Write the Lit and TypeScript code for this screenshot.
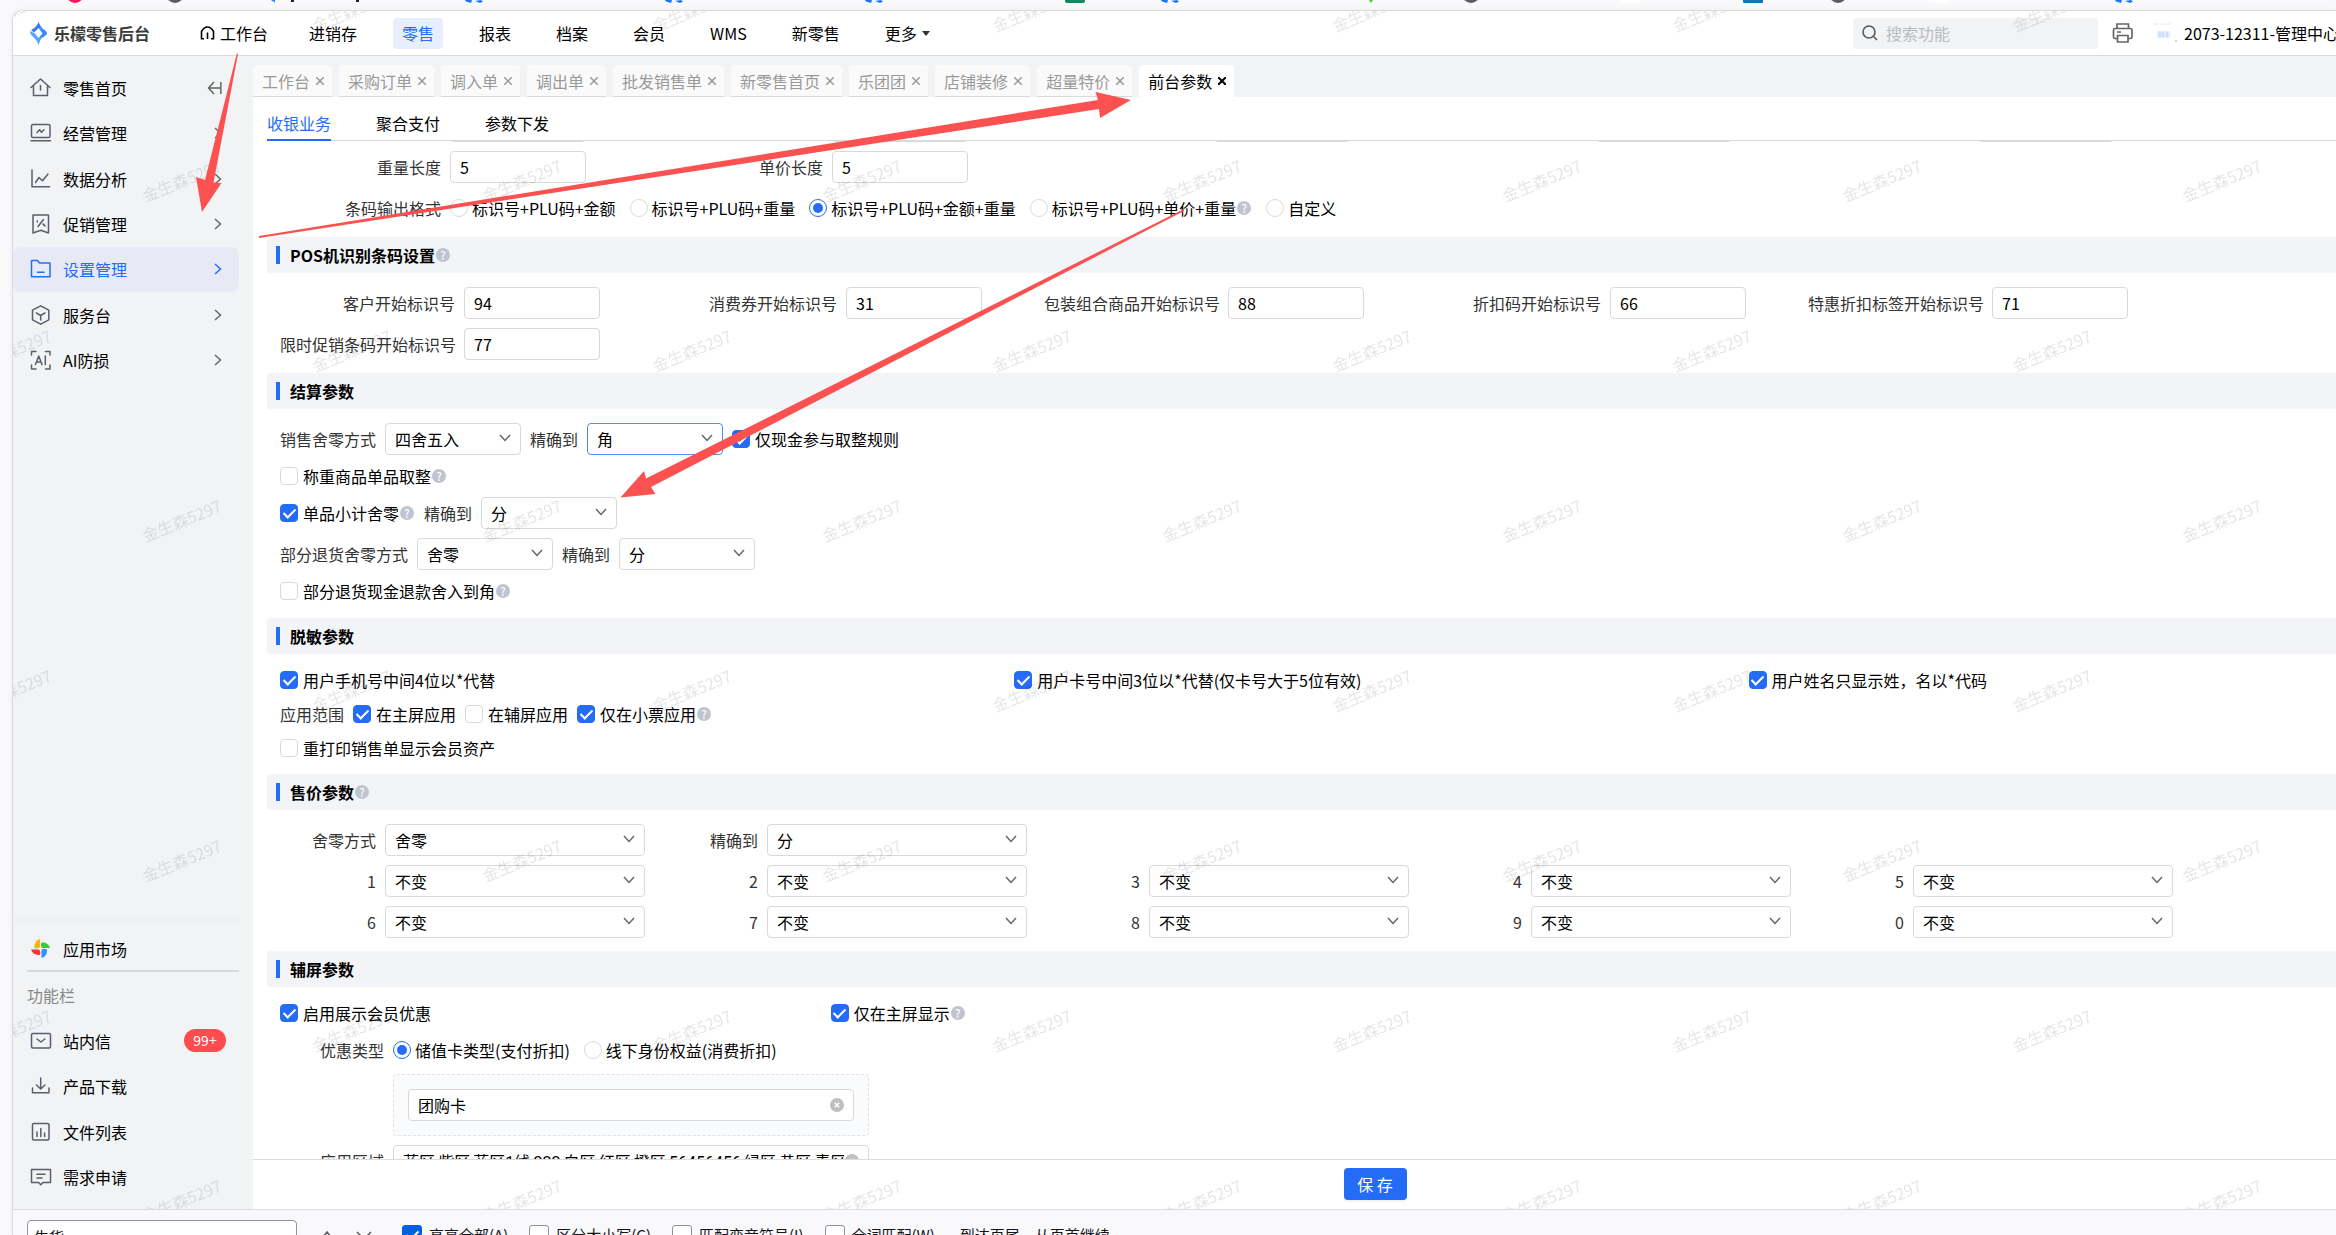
import { LitElement, html, css, svg, nothing, TemplateResult } from "lit";
import { customElement, state } from "lit/decorators.js";
import { classMap } from "lit/directives/class-map.js";

type Glyph = TemplateResult<2>;

const icons: Record<string, Glyph> = {
  home: svg`<path d="M1 10.500 10.500 2 20 10.500M3.500 8.500V18.500H17.500V8.500M10.500 8.500V13"/>`,
  monitor: svg`<rect x="1.500" y="2.500" width="18.500" height="13" rx="1.500"/><path d="M1 18.800H20.500M7 10.500 9.500 7.800 11.500 10.300 14 7.800"/>`,
  chart: svg`<path d="M2 2V18.800H19.500M5.500 14.500 9 9.500 12.500 12.800 18 6"/>`,
  promo: svg`<path d="M3 2H18.500V20L10.800 17.300 3 20ZM13.500 6.500 8 13.500"/><path d="M7.300 8V9M14 11.500V12.500M13 11 15 13"/>`,
  folder: svg`<path d="M1.500 18V2.500H7.500L9.500 5H20V18.800H1.500ZM7.500 14.200H14"/>`,
  box: svg`<path d="M10.700 1.800 18.800 6.200V15.800L10.700 20.200 2.500 15.800V6.200ZM10.700 16V11.500M10.700 11.500 6.300 8.800M10.700 11.500 15 8.800"/>`,
  ai: svg`<path d="M1.500 6V2.500H6M15.500 2.500H20V6M20 16V20H15.500M6 20H1.500V16"/><path d="M5.500 15.500 8.700 7 12 15.500M6.600 13H10.900M15.300 7V15.500"/>`,
  mail: svg`<rect x="1.500" y="3.500" width="19" height="14.500" rx="1.500"/><path d="M7 9 10.800 12 14.800 9"/>`,
  download: svg`<path d="M10.700 3V13.500M6.500 10 10.700 14 15 10M2.500 13V17.800H19V13"/>`,
  file: svg`<rect x="2.500" y="2.500" width="16.500" height="16.500" rx="1.500"/><path d="M7 11V15.500M10.800 7.500V15.500M14.600 12V15.500"/>`,
  speech: svg`<path d="M1.500 3.500H20.500V16.500H13L10.800 18.800 8.600 16.500H1.500ZM7 8.300H15M7 12H12"/>`,
};

const icon = (name: string) => html`<svg class="icon" viewBox="0 0 22 22" aria-hidden="true">${icons[name]}</svg>`;
const chevronRight = html`<svg class="chev" viewBox="0 0 8 14" aria-hidden="true"><path d="M1 2 6.500 7 1 12"/></svg>`;
const help = html`<span class="help">?</span>`;

const sideTop = [
  ["home", "零售首页"], ["monitor", "经营管理"], ["chart", "数据分析"], ["promo", "促销管理"],
  ["folder", "设置管理"], ["box", "服务台"], ["ai", "AI防损"],
];
const sideTools = [["mail", "站内信"], ["download", "产品下载"], ["file", "文件列表"], ["speech", "需求申请"]];
const navItems = ["进销存", "零售", "报表", "档案", "会员", "WMS", "新零售"];
const tabs = ["工作台", "采购订单", "调入单", "调出单", "批发销售单", "新零售首页", "乐团团", "店铺装修", "超量特价", "前台参数"];
const barcodeFormats = ["标识号+PLU码+金额", "标识号+PLU码+重量", "标识号+PLU码+金额+重量", "标识号+PLU码+单价+重量", "自定义"];
const posCodes = [
  ["客户开始标识号", "94"], ["消费券开始标识号", "31"], ["包装组合商品开始标识号", "88"],
  ["折扣码开始标识号", "66"], ["特惠折扣标签开始标识号", "71"], ["限时促销条码开始标识号", "77"],
];
const digits = ["1", "2", "3", "4", "5", "6", "7", "8", "9", "0"];

@customElement("app-root")
export class AppRoot extends LitElement {
  @state() private section = "设置管理";
  @state() private tab = "前台参数";
  private seq = 0;

  static styles = css`
    :host {
      display: block;
      font: 16px/24px "Noto Sans CJK SC", "Noto Sans", sans-serif;
      color: #000;
    }
    * { box-sizing: border-box; }
    button, input, select { font: inherit; color: inherit; margin: 0; }
    button { border: 0; background: none; padding: 0; cursor: pointer; }
    a { color: inherit; text-decoration: none; }
    svg { display: block; flex: none; }

    .screen {
      position: relative;
      height: 100vh;
      overflow: hidden;
      display: flex;
      flex-direction: column;
      background: #f9f9fb;
    }
    .strip { height: 10px; flex: none; overflow: hidden; }
    .frame {
      position: relative;
      flex: 1;
      min-height: 0;
      margin-left: 12px;
      border: solid #d9dadd;
      border-width: 1px 0 0 1px;
      border-top-left-radius: 10px;
      overflow: hidden;
      display: flex;
      flex-direction: column;
      background: #fff;
      box-shadow: 0 0 6px #0000000d;
    }

    .top {
      flex: none;
      height: 45px;
      display: flex;
      align-items: center;
      border-bottom: 1px solid #d8dadc;
      padding-left: 17px;
      white-space: nowrap;
    }
    .brand { flex: 0 0 161px; display: flex; align-items: center; gap: 7px; font-weight: 700; color: #3a3a3a; }
    .nav { display: flex; gap: 27px; }
    .nav-item { height: 31px; padding: 0 9px; border-radius: 4px; display: flex; align-items: center; gap: 5px; }
    .nav-item.first { padding-right: 5px; }
    .nav-item.on { background: #e7eefd; color: #246cf5; }
    .caret { border: 4px solid transparent; border-top: 5px solid #333; border-bottom: 0; }
    .tools { margin-left: auto; flex: 0 0 483px; display: flex; align-items: center; min-width: 0; }
    .search { flex: 0 0 245px; height: 31px; border-radius: 4px; background: #f1f3f5; display: flex; align-items: center; gap: 8px; padding-left: 9px; }
    .search input { flex: 1; min-width: 0; border: 0; background: none; outline: 0; padding: 0; }
    .search input::placeholder { color: #b9bcc0; opacity: 1; }
    .print { margin: 0 20px 0 14px; }
    .user { flex: 1; min-width: 0; overflow: hidden; display: flex; align-items: center; gap: 7px; }

    .mid { flex: 1; min-height: 0; display: flex; }
    .side {
      flex: 0 0 240px;
      background: #f1f3f5;
      display: flex;
      flex-direction: column;
      padding: 9px 14px 9px 0;
    }
    .menu { display: grid; grid-auto-rows: 1fr; height: 318px; }
    .menu.tools-menu { height: 182px; }
    .side-item {
      display: flex; align-items: center; gap: 11px; width: 100%; height: 100%;
      padding: 0 17px; border-radius: 8px; text-align: left;
    }
    .side-item.on { background: #e7eaf4; color: #246cf5; }
    .side-item .grow { flex: 1; }
    .icon { width: 22px; height: 22px; fill: none; stroke: #5d5d6d; stroke-width: 1.500; stroke-linejoin: round; stroke-linecap: round; }
    .chev { width: 8px; height: 14px; fill: none; stroke: #666; stroke-width: 1.500; }
    .on .icon, .on .chev { stroke: #246cf5; }
    .market { margin-top: auto; height: 52px; border-top: 6px solid #eff1f3; padding-top: 4px; }
    .rule { height: 2px; background: #d6d8da; margin-left: 14px; }
    .caption { padding: 11px 0 11px 14px; color: #888; }
    .badge { background: #ff4d4f; color: #fff; font-size: 14px; line-height: 23px; width: 42px; text-align: center; border-radius: 12px; margin-right: -4px; }

    .main { flex: 1; min-width: 0; display: flex; flex-direction: column; background: #fff; }
    .tabs { flex: none; display: flex; gap: 7px; height: 41px; padding-top: 9px; background: #f1f3f5; white-space: nowrap; }
    .tab { display: flex; align-items: center; gap: 6px; padding: 0 8px 0 9px; background: #fafafa; color: #999; border-bottom: 1px solid #d9d9d9; border-radius: 4px 4px 0 0; }
    .tab.on { background: #fff; color: #000; border-color: #fff; }
    .x { width: 8px; height: 8px; fill: none; stroke: currentColor; stroke-width: 1.500; }
    .tab.on .x { stroke-width: 2; }
    .subtabs { flex: none; display: flex; gap: 45px; height: 44px; margin-left: 14px; border-bottom: 1px solid #d9d9d9; }
    .subtab { height: 44px; padding-top: 9px; border-bottom: 2px solid transparent; }
    .subtab.on { color: #246cf5; border-color: #246cf5; }

    .scroll { flex: 1; min-height: 0; overflow: hidden; padding-left: 14px; }
    .scrolled { margin-top: -31px; }
    .body { padding: 14px 13px 13px; display: flex; flex-direction: column; gap: 9px; }
    .body.first { padding: 0 13px 13px; }
    .body.roomy { padding-bottom: 15px; }
    .body.loose { gap: 10px; padding-bottom: 14px; }
    .head { height: 36px; background: #f2f4f7; border-radius: 4px 0 0 4px; display: flex; align-items: center; padding-left: 9px; margin: 0; font-size: 16px; font-weight: 700; }
    .head::before { content: ""; width: 4px; height: 18px; background: #246cf5; margin-right: 10px; }
    .help {
      flex: none; width: 14px; height: 14px; border-radius: 7px; background: #bfc4d0; color: #fff;
      font-size: 11px; line-height: 14px; font-weight: 500; text-align: center; margin: 0 1px;
    }
    .fields { display: grid; grid-template-columns: repeat(5, 1fr); row-gap: 9px; padding-right: 133px; }
    .field { display: flex; align-items: center; gap: 9px; white-space: nowrap; }
    .lab { text-align: right; color: #333; flex: none; }
    .w161 .lab, .lab.w161 { width: 161px; }
    .w175 .lab { width: 175px; }
    .w96 .lab { width: 96px; }
    .lab.w104 { width: 104px; }
    .text {
      width: 136px; height: 32px; border: 1px solid #d9d9d9; border-radius: 4px; background: #fff;
      padding: 0 9px; outline: 0;
    }
    .pick { position: relative; width: 136px; display: block; }
    .w96 .pick { width: 260px; }
    .pick select { appearance: none; width: 100%; height: 32px; border: 1px solid #d9d9d9; border-radius: 4px; background: #fff; padding: 0 28px 0 9px; outline: 0; }
    .pick.focus select { border-color: #4a8bf8; }
    .pick svg { position: absolute; right: 10px; top: 11px; width: 12px; height: 8px; fill: none; stroke: #666; stroke-width: 1.500; pointer-events: none; }

    .row { display: flex; align-items: center; gap: 9px; min-height: 24px; white-space: nowrap; }
    .row.radios { gap: 14px; }
    .row.radios .lab { margin-right: -5px; }
    .row.format { min-height: 32px; }
    .thirds { display: grid; grid-template-columns: 5fr 5fr 4fr; margin-right: -13px; }
    .halves { display: grid; grid-template-columns: 15fr 41fr; margin: 0 -13px 4px 0; }
    .opt { display: inline-flex; align-items: center; gap: 5px; }
    .row.radios .opt { gap: 4px; }
    .opt-text { display: inline-flex; align-items: center; }
    .cb, .rd { appearance: none; flex: none; width: 18px; height: 18px; border: 1px solid #d9d9d9; background: #fff; border-radius: 4px; display: grid; place-items: center; }
    .cb:checked { background: #246cf5; border-color: #246cf5; }
    .cb:checked::after { content: ""; width: 5px; height: 10px; margin-top: -2px; border: solid #fff; border-width: 0 2px 2px 0; transform: rotate(45deg); }
    .rd { border-radius: 9px; }
    .rd:checked { border-color: #246cf5; }
    .rd:checked::after { content: ""; width: 10px; height: 10px; border-radius: 5px; background: #246cf5; }

    .cards { margin: 3px 0 0 113px; width: 476px; padding: 14px; border: 1px dashed #e0e2e6; border-radius: 4px; background: #fafbfd; }
    .clearable { position: relative; display: block; width: 476px; }
    .cards .clearable { width: auto; }
    .clearable .text { width: 100%; padding-right: 24px; }
    .area .text { font-family: Roboto, "Noto Sans CJK SC", sans-serif; }
    .clear { position: absolute; right: 10px; top: 9px; width: 14px; height: 14px; }

    .foot { flex: none; height: 50px; border-top: 1px solid #dcdcdc; display: flex; align-items: center; justify-content: center; padding-left: 161px; }
    .save { width: 63px; height: 32px; margin-bottom: 1px; border-radius: 4px; background: #246cf5; color: #fff; box-shadow: 0 2px 0 #0000000b; }

    .find {
      flex: none; height: 26px; display: flex; align-items: flex-start; border-top: 1px solid #dcdce0; background: #f9f9fb;
      padding: 10px 0 0 14px; font-size: 15px; line-height: 30px; color: #15141a; overflow: hidden; white-space: nowrap;
    }
    .find .query { width: 270px; height: 32px; border: 1px solid #8f8f9d; border-radius: 4px; background: #fff; padding: 0 6px; outline: 0; }
    .find .step { margin: 11px 0 0 24px; }
    .find .step + .step { margin: 11px 30px 0 23px; }
    .find .opt { gap: 7px; height: 30px; margin-right: 21px; }
    .find .status { margin-left: 4px; }
    .find .cb { width: 20px; height: 20px; border-color: #8f8f9d; border-radius: 3px; }
    .find .cb:checked { background: #0061e0; border-color: #0061e0; }

    .marks { position: absolute; left: 0; top: 0; width: 100%; height: calc(100% - 26px); pointer-events: none; }
    .marks text { font-size: 16px; fill: #000; fill-opacity: 0.1; }
    .arrows { position: absolute; left: 0; top: 0; width: 100%; height: 100%; pointer-events: none; fill: #fb5151; }
  `;

  private check(label: string, on = false, tip = false) {
    return html`<label class="opt"><input class="cb" type="checkbox" ?checked=${on} /><span class="opt-text">${label}${tip ? help : nothing}</span></label>`;
  }

  private radio(name: string, label: string, on = false, tip = false) {
    return html`<label class="opt"><input class="rd" type="radio" name=${name} ?checked=${on} /><span class="opt-text">${label}${tip ? help : nothing}</span></label>`;
  }

  private field(label: string, value: string) {
    const id = `f${this.seq++}`;
    return html`<div class="field"><label class="lab" for=${id}>${label}</label><input class="text" id=${id} .value=${value} /></div>`;
  }

  private select(label: string, value: string, focus = false) {
    const id = `f${this.seq++}`;
    return html`<div class="field">
      <label class="lab" for=${id}>${label}</label>
      <span class=${classMap({ pick: true, focus })}>
        <select id=${id}><option>${value}</option></select>
        <svg viewBox="0 0 12 8" aria-hidden="true"><path d="M1 1 6 6.500 11 1"/></svg>
      </span>
    </div>`;
  }

  private head(title: string, tip = false) {
    return html`<h2 class="head">${title}${tip ? help : nothing}</h2>`;
  }

  private clearButton() {
    return html`<button class="clear" aria-label="清除"><svg viewBox="0 0 14 14"><circle cx="7" cy="7" r="7" fill="#bfbfbf"/><path d="M4.800 4.800 9.200 9.200M9.200 4.800 4.800 9.200" stroke="#fff" stroke-width="1.500"/></svg></button>`;
  }

  private strip() {
    const blue = [474, 674, 874, 2124];
    return html`<div class="strip"><svg width="100%" height="10" aria-hidden="true">
      <circle cx="75" cy="-6" r="9" fill="#f5145f"/>
      <circle cx="175" cy="-6" r="9" fill="#5b5b66"/>
      <path d="M271 0H275V2.500L272 1Z" fill="#2a8cff"/>
      <path d="M291 0H294V2H291ZM356 0H359V2H356Z" fill="#222"/>
      ${blue.map((x) => svg`<path d="M${x - 9} 0H${x - 2}L${x - 3} 3 ${x - 8} 1.500ZM${x + 1} 1 ${x + 7} 0 ${x + 9} 1.500 ${x + 6} 3Z" fill="#1677ff"/>`)}
      <path d="M1065 0H1085V1Q1085 3 1083 3H1067Q1065 3 1065 1Z" fill="#0f8a5f"/>
      <path d="M1161 0H1168L1167 3 1162 1.500ZM1171 1 1177 0 1179 1.500 1176 3Z" fill="#1677ff"/>
      <path d="M1369 0H1373L1371 3Z" fill="#4bc93d"/>
      <circle cx="1471" cy="-6" r="9" fill="#5b5b66"/>
      <path d="M1743 0H1763V2Q1763 3 1762 3H1744Q1743 3 1743 2Z" fill="#0f75bd"/>
      <circle cx="1838" cy="-6" r="9" fill="#5b5b66"/>
      <path d="M1621 0H1641V3H1621ZM1928 0H1948V3H1928Z" fill="#fff"/>
    </svg></div>`;
  }

  private header() {
    return html`<header class="top">
      <div class="brand">
        <svg width="17" height="23" viewBox="0 0 17 23" aria-hidden="true">
          <path d="M8.500 0Q10 4 13 7L8.500 6 4 10.500 1 8Q7 5 8.500 0Z" fill="#2f7bf6"/>
          <path d="M0 9 5 11.500 8.500 16 13 14.500Q9.500 18 8.500 23 7 18 3.500 15 0 12.500 0 9Z" fill="#56a4fb"/>
          <path d="M13 7Q17 9 17 12 15 14 12.500 15.500L8.500 16 12.500 11.500 8.500 6Z" fill="#3c8cf8"/>
        </svg>
        <span>乐檬零售后台</span>
      </div>
      <nav class="nav">
        <a class="nav-item first" href="#">
          <svg width="15" height="14" viewBox="0 0 15 14" fill="none" stroke="#000" stroke-width="1.600" aria-hidden="true"><path d="M4 12.800H1.500V5.500Q4 1 7.500 1 11 1 13.500 5.500V12.800H11M7.500 6.500V13"/></svg>
          <span>工作台</span>
        </a>
        ${navItems.map((n) => html`<a class=${classMap({ "nav-item": true, on: n === "零售" })} href="#">${n}</a>`)}
        <a class="nav-item" href="#"><span>更多</span><span class="caret"></span></a>
      </nav>
      <div class="tools">
        <label class="search">
          <svg width="16" height="16" viewBox="0 0 16 16" fill="none" stroke="#5a5a5a" stroke-width="1.600" aria-hidden="true"><circle cx="7" cy="7" r="6"/><path d="M11.500 11.500 15 15"/></svg>
          <input type="search" placeholder="搜索功能" aria-label="搜索功能" />
        </label>
        <button class="print" aria-label="打印">
          <svg width="22" height="22" viewBox="0 0 22 22" fill="none" stroke="#666" stroke-width="1.700" aria-hidden="true"><path d="M5 6V2H16.500V6M5 16.500H3Q1.500 16.500 1.500 15V8Q1.500 6.500 3 6.500H18.500Q20 6.500 20 8V15Q20 16.500 18.500 16.500H16.500M5.500 13.500H16V20H5.500ZM5 10H9"/></svg>
        </button>
        <div class="user">
          <svg width="23" height="22" viewBox="0 0 23 22" aria-hidden="true"><path d="M0 2H17" stroke="#e8e8e8" stroke-dasharray="5 1"/><path d="M3 9H16V16H3Z" fill="#e3effe"/><path d="M6 10V15M9 10V15M13 10V15" stroke="#c8defc" stroke-width="2"/><path d="M22 18V20" stroke="#7fa8f5"/></svg>
          <span>2073-12311-管理中心</span>
        </div>
      </div>
    </header>`;
  }

  private sidebar() {
    return html`<aside class="side">
      <nav class="menu">
        ${sideTop.map(([ic, label], i) => html`<button class=${classMap({ "side-item": true, on: this.section === label })} @click=${() => (this.section = label)}>
          ${icon(ic)}<span class="grow">${label}</span>
          ${i === 0
            ? html`<svg width="15" height="14" viewBox="0 0 15 14" fill="none" stroke="#666" stroke-width="1.500" aria-hidden="true"><path d="M7 1 1.500 7 7 13M1.500 7H13.500M13.800 1V13"/></svg>`
            : chevronRight}
        </button>`)}
      </nav>
      <div class="market">
        <button class="side-item">
          <svg width="22" height="22" viewBox="0 0 22 22" aria-hidden="true">
            <path d="M10 1V9Q8 11 4.500 10 4 3 10 1Z" fill="#ffb10a"/>
            <path d="M20 10H12Q10 7.500 11.500 4.500 18.500 4 20 10Z" fill="#2fd03a"/>
            <path d="M11.500 20V12Q13.500 10 17 11.500 17.500 18.500 11.500 20Z" fill="#3391ff"/>
            <path d="M1 11.500H9Q11 13.500 10 17 2.500 17 1 11.500Z" fill="#fb3434"/>
          </svg>
          <span>应用市场</span>
        </button>
      </div>
      <div class="rule"></div>
      <div class="caption">功能栏</div>
      <nav class="menu tools-menu">
        ${sideTools.map(([ic, label]) => html`<button class="side-item">${icon(ic)}<span class="grow">${label}</span>${ic === "mail" ? html`<span class="badge">99+</span>` : nothing}</button>`)}
      </nav>
    </aside>`;
  }

  private form() {
    return html`<div class="scroll"><div class="scrolled">
      <section class="body first">
        <div class="fields w161">
          ${[0, 1, 2, 3, 4].map(() => this.field("", ""))}
          ${this.field("重量长度", "5")}${this.field("单价长度", "5")}
        </div>
        <div class="row radios format">
          <span class="lab w161">条码输出格式</span>
          ${barcodeFormats.map((f, i) => this.radio("format", f, i === 2, i === 3))}
        </div>
      </section>

      ${this.head("POS机识别条码设置", true)}
      <section class="body"><div class="fields w175">${posCodes.map(([l, v]) => this.field(l, v))}</div></section>

      ${this.head("结算参数")}
      <section class="body roomy">
        <div class="row">${this.select("销售舍零方式", "四舍五入")}${this.select("精确到", "角", true)}${this.check("仅现金参与取整规则", true)}</div>
        <div class="row">${this.check("称重商品单品取整", false, true)}</div>
        <div class="row">${this.check("单品小计舍零", true, true)}${this.select("精确到", "分")}</div>
        <div class="row">${this.select("部分退货舍零方式", "舍零")}${this.select("精确到", "分")}</div>
        <div class="row">${this.check("部分退货现金退款舍入到角", false, true)}</div>
      </section>

      ${this.head("脱敏参数")}
      <section class="body loose">
        <div class="thirds">
          ${this.check("用户手机号中间4位以*代替", true)}${this.check("用户卡号中间3位以*代替(仅卡号大于5位有效)", true)}${this.check("用户姓名只显示姓，名以*代码", true)}
        </div>
        <div class="row"><span class="lab">应用范围</span>${this.check("在主屏应用", true)}${this.check("在辅屏应用")}${this.check("仅在小票应用", true, true)}</div>
        <div class="row">${this.check("重打印销售单显示会员资产")}</div>
      </section>

      ${this.head("售价参数", true)}
      <section class="body">
        <div class="fields w96">${this.select("舍零方式", "舍零")}${this.select("精确到", "分")}</div>
        <div class="fields w96">${digits.map((d) => this.select(d, "不变"))}</div>
      </section>

      ${this.head("辅屏参数")}
      <section class="body">
        <div class="halves">${this.check("启用展示会员优惠", true)}${this.check("仅在主屏显示", true, true)}</div>
        <div class="row radios">
          <span class="lab w104">优惠类型</span>
          ${this.radio("benefit", "储值卡类型(支付折扣)", true)}${this.radio("benefit", "线下身份权益(消费折扣)")}
        </div>
        <div class="cards"><span class="clearable"><input class="text" aria-label="储值卡类型" .value=${"团购卡"} />${this.clearButton()}</span></div>
        <div class="row area">
          <label class="lab w104" for="area">应用区域</label>
          <span class="clearable"><input class="text" id="area" .value=${"蓝区,紫区,蓝区1线,222,白区,红区,橙区,56456456,绿区,黄区,青区"} />${this.clearButton()}</span>
        </div>
      </section>
    </div></div>`;
  }

  render() {
    this.seq = 0;
    return html`<div class="screen">
      ${this.strip()}
      <div class="frame">
        ${this.header()}
        <div class="mid">
          ${this.sidebar()}
          <main class="main">
            <div class="tabs">
              ${tabs.map((t) => html`<button class=${classMap({ tab: true, on: this.tab === t })} @click=${() => (this.tab = t)}><span>${t}</span><svg class="x" viewBox="0 0 8 8" aria-hidden="true"><path d="M0 0 8 8M8 0 0 8"/></svg></button>`)}
            </div>
            <div class="subtabs">
              <button class="subtab on">收银业务</button><button class="subtab">聚合支付</button><button class="subtab">参数下发</button>
            </div>
            ${this.form()}
            <div class="foot"><button class="save">保 存</button></div>
          </main>
        </div>
        <div class="find">
          <input class="query" aria-label="在页面中查找" .value=${"生货"} />
          <svg class="step" width="12" height="8" viewBox="0 0 12 8" fill="none" stroke="#5b5b66" stroke-width="1.500"><path d="M1 7 6 1 11 7"/></svg>
          <svg class="step" width="16" height="9" viewBox="0 0 16 9" fill="none" stroke="#5b5b66" stroke-width="1.500"><path d="M1 1 8 8 15 1"/></svg>
          ${this.check("高亮全部(A)", true)}${this.check("区分大小写(C)")}${this.check("匹配变音符号(I)")}${this.check("全词匹配(W)")}
          <span class="status">到达页尾，从页首继续</span>
        </div>
        <svg class="marks" aria-hidden="true">
          <defs>
            <pattern id="mark" x="84" y="85" width="340" height="340" patternUnits="userSpaceOnUse">
              <text x="85" y="91" text-anchor="middle" transform="rotate(-22 85 85)">金生森5297</text>
              <text x="255" y="261" text-anchor="middle" transform="rotate(-22 255 255)">金生森5297</text>
            </pattern>
          </defs>
          <rect width="100%" height="100%" fill="url(#mark)"/>
        </svg>
      </div>
      <svg class="arrows" aria-hidden="true">
        <path d="M237 53 238 54 213.500 182.500 221.500 183 202 212 196 177 205 180Z"/>
        <path d="M259 236 1098 100 1095.500 92 1131 100 1100 118 1099 109 259 238Z"/>
        <path d="M1184 209 1184 211 651 487 655.500 494 620.500 497.500 644 471 646 478.500Z"/>
      </svg>
    </div>`;
  }
}
